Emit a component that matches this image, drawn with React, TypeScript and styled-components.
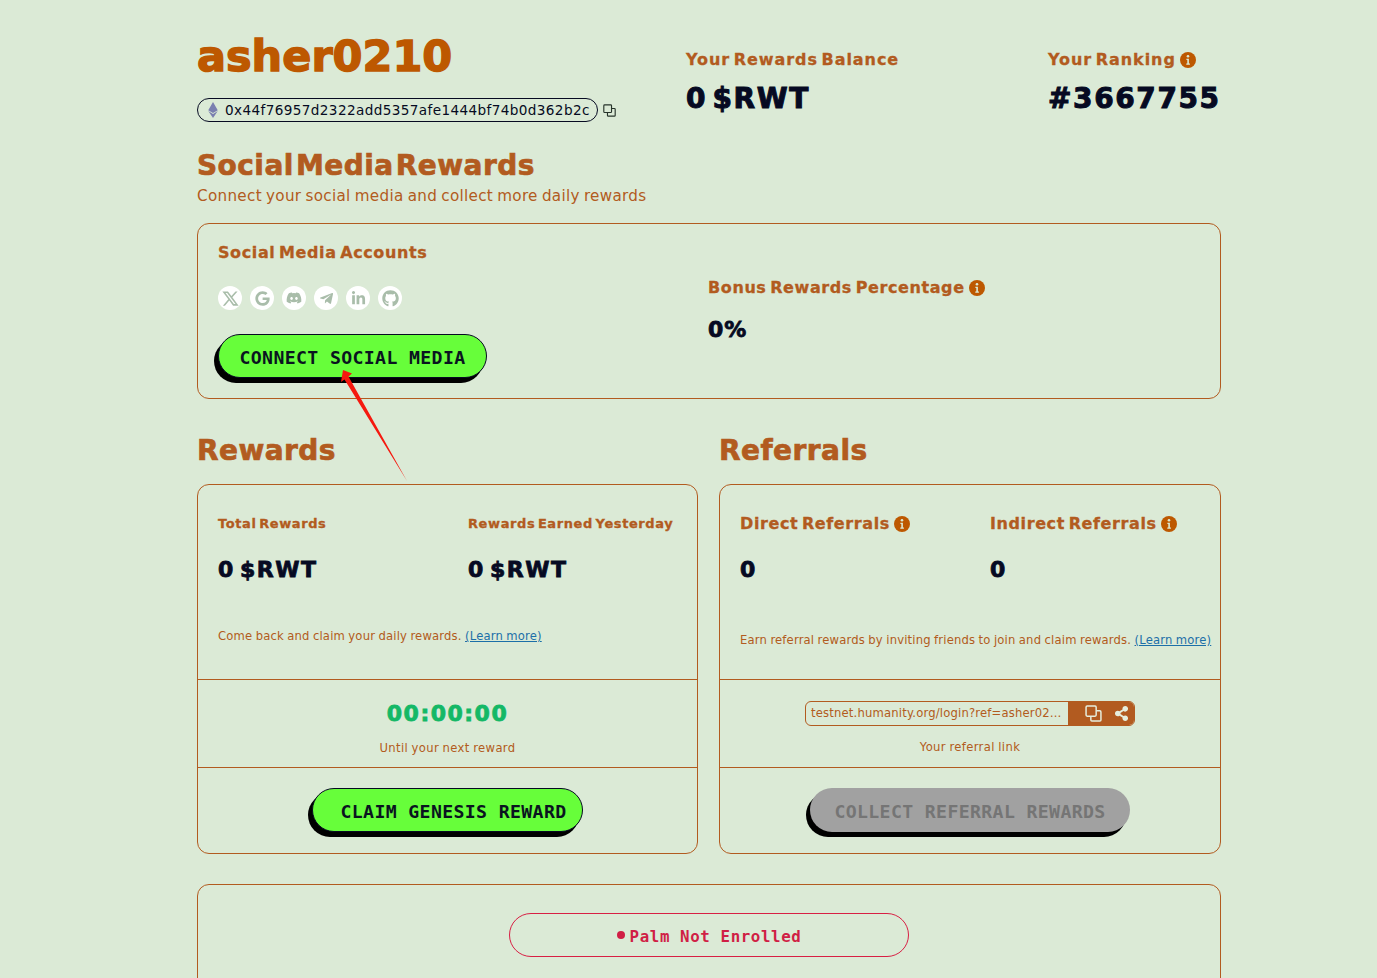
import React from "react";
import styled, { createGlobalStyle } from "styled-components";
import { FaGoogle, FaDiscord, FaTelegramPlane, FaLinkedinIn, FaGithub, FaEthereum, FaShareAlt } from "react-icons/fa";
import { RiTwitterXLine } from "react-icons/ri";

const brown = "#b25b20";
const orange = "#bd5800";
const navy = "#060a22";
const wide = `"DejaVu Sans", "Liberation Sans", sans-serif`;
const mono = `"DejaVu Sans Mono", "Liberation Mono", monospace`;

const Global = createGlobalStyle`
  html, body { margin: 0; padding: 0; background: #dbead6; height: 978px; overflow: hidden; }
  * { box-sizing: border-box; }
  body { font-family: ${wide}; color: ${brown}; }
`;

const Page = styled.div`
  position: relative;
  width: 1024px;
  margin-left: 197px;
  padding-top: 31px;
`;
const Header = styled.header`
  display: grid;
  grid-template-columns: 489px 362px 1fr;
  height: 119px;
`;
const UserName = styled.h1`
  margin: 0;
  font-size: 43px;
  line-height: 50px;
  font-weight: 700;
  color: ${orange};
  letter-spacing: 0px;
  -webkit-text-stroke: 1.4px ${orange};
`;
const WalletRow = styled.div`
  display: flex;
  align-items: center;
  gap: 5px;
  margin-top: 17px;
`;
const WalletPill = styled.div`
  display: flex;
  align-items: center;
  width: 401px;
  height: 24px;
  padding-left: 7px;
  gap: 4px;
  border: 1px solid ${navy};
  border-radius: 12px;
  font-size: 13.6px;
  letter-spacing: 0.38px;
  color: ${navy};
  white-space: nowrap;
`;
const StatBlock = styled.div`
  padding-top: 18px;
`;
const StatLabel = styled.div`
  display: flex;
  align-items: center;
  gap: 4px;
  font-size: 16px;
  line-height: 22px;
  font-weight: 700;
  letter-spacing: 0.95px;
  word-spacing: -3px;
  color: ${brown};
  -webkit-text-stroke: 0.3px ${brown};
`;
const StatValue = styled.div`
  margin-top: 12px;
  font-size: 28px;
  line-height: 32px;
  font-weight: 700;
  color: ${navy};
  letter-spacing: 1.6px;
  word-spacing: -6px;
  -webkit-text-stroke: 1px ${navy};
  white-space: nowrap;
`;
const SectionTitle = styled.h2`
  margin: 0;
  font-size: 28px;
  line-height: 32px;
  font-weight: 700;
  letter-spacing: 0.45px;
  word-spacing: -8px;
  color: ${brown};
  -webkit-text-stroke: 0.7px ${brown};
`;
const SectionSub = styled.p`
  margin: 4px 0 0;
  font-size: 15.2px;
  line-height: 20px;
  letter-spacing: 0.3px;
  word-spacing: -1px;
  color: ${brown};
`;
const Card = styled.section`
  border: 1px solid ${brown};
  border-radius: 12px;
`;
const SocialCard = styled(Card)`
  display: grid;
  grid-template-columns: 490px 1fr;
  height: 176px;
  margin-top: 17px;
  padding: 18px 20px 0;
`;
const CardLabel = styled.div`
  display: flex;
  align-items: center;
  gap: 4px;
  font-weight: 700;
  font-size: ${(p: { $size: number }) => p.$size}px;
  line-height: 22px;
  letter-spacing: 0.6px;
  word-spacing: -2.5px;
  color: ${brown};
  -webkit-text-stroke: 0.3px ${brown};
  white-space: nowrap;
`;
const IconRow = styled.div`
  display: flex;
  gap: 8px;
  margin-top: 22px;
`;
const SocialIcon = styled.span`
  display: flex;
  align-items: center;
  justify-content: center;
  width: 24px;
  height: 24px;
  border-radius: 50%;
  background: #fff;
  color: #a9bdaa;
  font-size: 15px;
`;
const ActionButton = styled.button<{ $off?: boolean; $w: number; $pad?: number }>`
  display: block;
  width: ${(p) => p.$w}px;
  height: 44px;
  border: ${(p) => (p.$off ? "none" : `1px solid ${navy}`)};
  border-radius: 22px;
  background: ${(p) => (p.$off ? "#a1a1a1" : "#67fe3a")};
  color: ${(p) => (p.$off ? "#757575" : "#0a1420")};
  box-shadow: -4px 5px 0 #000;
  font-family: ${mono};
  font-size: 18.2px;
  font-weight: 700;
  letter-spacing: 0.35px;
  padding: 2px 0 0 ${(p) => p.$pad ?? 0}px;
  white-space: nowrap;
`;
const ConnectButton = styled(ActionButton)`
  margin-top: 24px;
`;
const BonusCol = styled.div`
  padding-top: 35px;
`;
const BonusValue = styled.div`
  margin-top: 18px;
  font-size: 22px;
  line-height: 26px;
  font-weight: 700;
  letter-spacing: 1px;
  color: ${navy};
  -webkit-text-stroke: 0.8px ${navy};
`;
const Columns = styled.div`
  display: grid;
  grid-template-columns: 501px 502px;
  column-gap: 21px;
`;
const ColTitleRow = styled(Columns)`
  margin-top: 36px;
`;
const PanelRow = styled(Columns)`
  margin-top: 17px;
`;
const Panel = styled(Card)`
  display: flex;
  flex-direction: column;
  height: 370px;
`;
const PanelTop = styled.div`
  height: 195px;
  padding: 28px 0 0 20px;
  border-bottom: 1px solid ${brown};
`;
const Pair = styled.div`
  display: grid;
  grid-template-columns: 250px 1fr;
`;
const SmallValue = styled.div`
  margin-top: 22px;
  font-size: 22px;
  line-height: 26px;
  font-weight: 700;
  letter-spacing: 1.5px;
  word-spacing: -4px;
  color: ${navy};
  -webkit-text-stroke: 0.8px ${navy};
`;
const Note = styled.p<{ $top: number }>`
  margin: ${(p) => p.$top}px 0 0;
  font-size: 11.6px;
  line-height: 16px;
  letter-spacing: 0.17px;
  word-spacing: -0.5px;
  white-space: nowrap;
  color: ${brown};
`;
const LearnLink = styled.a`
  color: #1b6fa8;
  text-decoration: underline;
`;
const PanelMiddle = styled.div`
  height: 88px;
  display: flex;
  flex-direction: column;
  align-items: center;
  border-bottom: 1px solid ${brown};
`;
const Timer = styled.div`
  margin-top: 20px;
  font-size: 22px;
  line-height: 28px;
  font-weight: 700;
  letter-spacing: 1.5px;
  color: #14b866;
  -webkit-text-stroke: 0.8px #14b866;
`;
const Caption = styled.div<{ $top: number }>`
  margin-top: ${(p) => p.$top}px;
  font-size: 11.6px;
  line-height: 16px;
  letter-spacing: 0.35px;
  word-spacing: -0.5px;
  color: ${brown};
`;
const PanelBottom = styled.div`
  flex: 1;
  display: flex;
  align-items: flex-start;
  justify-content: center;
  padding-top: 20px;
`;
const LinkBox = styled.div`
  display: flex;
  width: 330px;
  height: 25px;
  margin-top: 21px;
  border: 1px solid ${brown};
  border-radius: 6px;
  overflow: hidden;
`;
const LinkText = styled.div`
  flex: 1;
  min-width: 0;
  padding: 0 6px 0 5px;
  font-size: 11.6px;
  line-height: 23px;
  letter-spacing: 0.18px;
  overflow: hidden;
  text-overflow: ellipsis;
  white-space: nowrap;
`;
const LinkActions = styled.div`
  display: flex;
  align-items: center;
  gap: 12px;
  width: 66px;
  flex: none;
  padding-left: 17px;
  background: ${brown};
  color: #e6eedd;
`;
const PalmCard = styled(Card)`
  display: flex;
  justify-content: center;
  height: 140px;
  margin-top: 30px;
  padding-top: 28px;
`;
const PalmPill = styled.div`
  display: flex;
  align-items: center;
  justify-content: center;
  gap: 5px;
  width: 400px;
  height: 44px;
  padding-top: 2px;
  border: 1px solid #d81f44;
  border-radius: 22px;
  font-family: ${mono};
  font-size: 15.8px;
  font-weight: 700;
  letter-spacing: 0.6px;
  color: #d01f45;
`;
const PalmDot = styled.span`
  width: 8px;
  height: 8px;
  margin-top: -2px;
  border-radius: 50%;
  background: #d01f45;
`;
const ArrowLayer = styled.svg`
  position: absolute;
  left: 130px;
  top: 350px;
  pointer-events: none;
`;

const Info = ({ color = orange, size = 16 }: { color?: string; size?: number }) => (
  <svg width={size} height={size} viewBox="0 0 16 16" style={{ flex: "none" }}>
    <circle cx="8" cy="8" r="8" fill={color} />
    <circle cx="8" cy="4.2" r="1.3" fill="#dbead6" />
    <path d="M6.4 6.8h2.5v4.6h1v1.3H6.3v-1.3h1V8.1h-.9z" fill="#dbead6" />
  </svg>
);

const Copy = ({ color, size }: { color: string; size: number }) => (
  <svg width={size} height={size} viewBox="0 0 16 16" fill="none" stroke={color} strokeWidth="1.4" style={{ flex: "none" }}>
    <rect x="1" y="1" width="9.5" height="9.5" rx="1" />
    <path d="M10.5 5.5H14a1 1 0 0 1 1 1V14a1 1 0 0 1-1 1H6.5a1 1 0 0 1-1-1v-3.5" />
  </svg>
);

export default function App() {
  return (
    <>
      <Global />
      <Page>
        <Header>
          <div>
            <UserName>asher0210</UserName>
            <WalletRow>
              <WalletPill>
                <FaEthereum size={16} color="#7a7fb0" />
                0x44f76957d2322add5357afe1444bf74b0d362b2c
              </WalletPill>
              <Copy color="#26332a" size={13} />
            </WalletRow>
          </div>
          <StatBlock>
            <StatLabel>Your Rewards Balance</StatLabel>
            <StatValue>0 $RWT</StatValue>
          </StatBlock>
          <StatBlock>
            <StatLabel>
              Your Ranking <Info />
            </StatLabel>
            <StatValue>#3667755</StatValue>
          </StatBlock>
        </Header>

        <SectionTitle>Social Media Rewards</SectionTitle>
        <SectionSub>Connect your social media and collect more daily rewards</SectionSub>

        <SocialCard>
          <div>
            <CardLabel $size={16}>Social Media Accounts</CardLabel>
            <IconRow>
              <SocialIcon><RiTwitterXLine size={19} /></SocialIcon>
              <SocialIcon><FaGoogle /></SocialIcon>
              <SocialIcon><FaDiscord size={16} /></SocialIcon>
              <SocialIcon><FaTelegramPlane /></SocialIcon>
              <SocialIcon><FaLinkedinIn /></SocialIcon>
              <SocialIcon><FaGithub size={17} /></SocialIcon>
            </IconRow>
            <ConnectButton $w={269}>CONNECT SOCIAL MEDIA</ConnectButton>
          </div>
          <BonusCol>
            <CardLabel $size={16}>
              Bonus Rewards Percentage <Info />
            </CardLabel>
            <BonusValue>0%</BonusValue>
          </BonusCol>
        </SocialCard>

        <ColTitleRow>
          <SectionTitle>Rewards</SectionTitle>
          <SectionTitle>Referrals</SectionTitle>
        </ColTitleRow>

        <PanelRow>
          <Panel>
            <PanelTop>
              <Pair>
                <CardLabel $size={13}>Total Rewards</CardLabel>
                <CardLabel $size={13}>Rewards Earned Yesterday</CardLabel>
              </Pair>
              <Pair>
                <SmallValue>0 $RWT</SmallValue>
                <SmallValue>0 $RWT</SmallValue>
              </Pair>
              <Note $top={45}>
                Come back and claim your daily rewards. <LearnLink>(Learn more)</LearnLink>
              </Note>
            </PanelTop>
            <PanelMiddle>
              <Timer>00:00:00</Timer>
              <Caption $top={12}>Until your next reward</Caption>
            </PanelMiddle>
            <PanelBottom>
              <ActionButton $w={271} $pad={12}>CLAIM GENESIS REWARD</ActionButton>
            </PanelBottom>
          </Panel>

          <Panel>
            <PanelTop>
              <Pair>
                <CardLabel $size={16}>
                  Direct Referrals <Info />
                </CardLabel>
                <CardLabel $size={16}>
                  Indirect Referrals <Info />
                </CardLabel>
              </Pair>
              <Pair>
                <SmallValue>0</SmallValue>
                <SmallValue>0</SmallValue>
              </Pair>
              <Note $top={49}>
                Earn referral rewards by inviting friends to join and claim rewards. <LearnLink>(Learn more)</LearnLink>
              </Note>
            </PanelTop>
            <PanelMiddle>
              <LinkBox>
                <LinkText>testnet.humanity.org/login?ref=asher0210</LinkText>
                <LinkActions>
                  <Copy color="#e6eedd" size={17} />
                  <FaShareAlt size={15} />
                </LinkActions>
              </LinkBox>
              <Caption $top={13}>Your referral link</Caption>
            </PanelMiddle>
            <PanelBottom>
              <ActionButton $off $w={320}>COLLECT REFERRAL REWARDS</ActionButton>
            </PanelBottom>
          </Panel>
        </PanelRow>

        <PalmCard>
          <PalmPill>
            <PalmDot />
            Palm Not Enrolled
          </PalmPill>
        </PalmCard>

        <ArrowLayer width="100" height="150" viewBox="0 0 100 150">
          <path d="M16 20 L25 23.5 L21.5 26.5 L80 131 L17.5 29.5 L14 32 Z" fill="#f5190f" />
        </ArrowLayer>
      </Page>
    </>
  );
}
